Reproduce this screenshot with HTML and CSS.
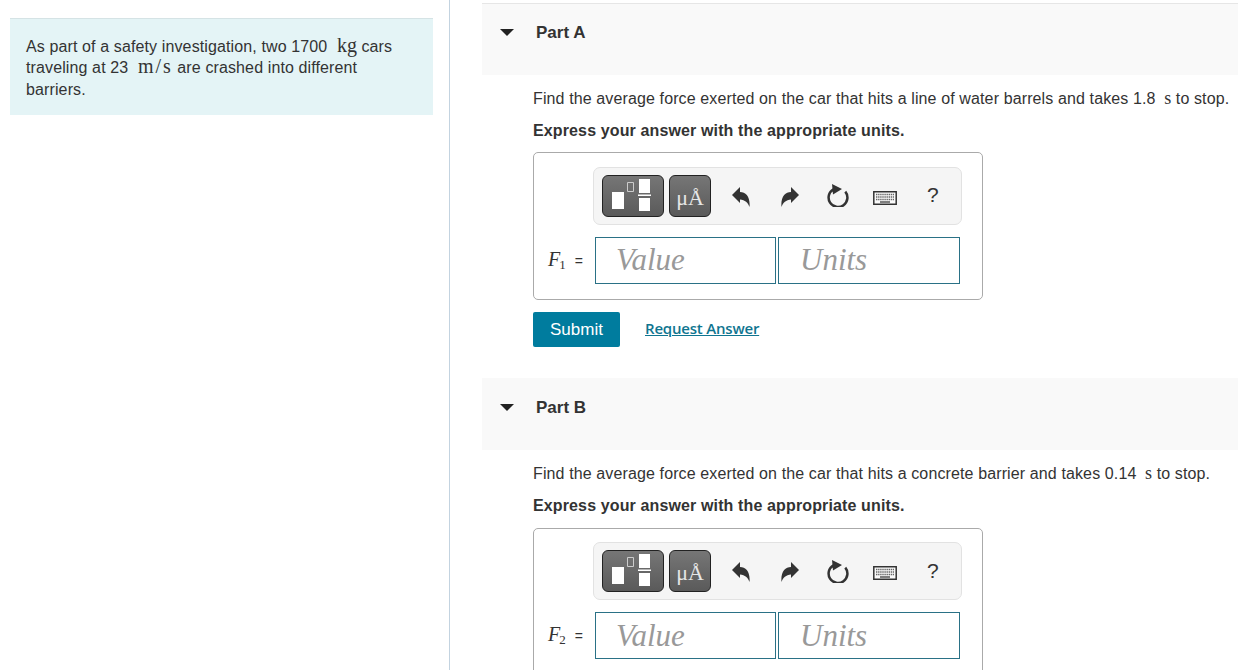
FILE: index.html
```html
<!DOCTYPE html>
<html lang="en">
<head>
    <meta charset="UTF-8">
    <title>Part A and Part B</title>
    <link rel="stylesheet" href="styles.css">
</head>
<body>
    <svg class="defs" width="0" height="0">
        <symbol id="templates" viewBox="1 1 60 40">
            <path fill="#fff" d="M10 17h12v17H10zM37 4h11v14H37zM37 23h11v13H37zM36 19.500h13v1.500H36z"/>
            <path fill="none" stroke="#ccc" d="M25.500 7.500h6v9h-6z"/>
        </symbol>
        <symbol id="undo" viewBox="0 0 18 20">
            <path fill="#333" d="M0 8 8 0v5c6 0 10.500 5 9.500 15C16 15.500 13 13 8 12.500V16z"/>
        </symbol>
        <symbol id="redo" viewBox="0 0 18 20">
            <path fill="#333" d="M18 8 10 0v5C4 5-.5 10 .5 20 2 15.500 5 13 10 12.500V16z"/>
        </symbol>
        <symbol id="reset" viewBox="0 0 22 23">
            <path fill="none" stroke="#333" stroke-width="2.500" d="M6.500 5.300A9.400 9.400 0 1 0 18.300 7.600"/>
            <path fill="#333" d="M5 0 15 5 6 10.500z"/>
        </symbol>
        <symbol id="keyboard" viewBox="0 0 24 14">
            <path fill="#fafafa" stroke="#333" stroke-width="1.500" d="M.8.8h22.400v12.400H.8z"/>
            <path fill="none" stroke="#666" stroke-width="1.500" stroke-dasharray="1.400 .7" d="M3 3.500h18M3 6h18M3 8.500h18"/>
            <path fill="none" stroke="#555" stroke-width="1.500" d="M7 11h10"/>
        </symbol>
    </svg>

    <div class="page">
        <div class="intro-col">
            <div class="intro">
                As part of a safety investigation, two 1700 <span class="unit unit-big">kg</span> cars
                traveling at 23 <span class="unit unit-big unit-rate">m/s</span> are crashed into different barriers.
            </div>
        </div>

        <div class="parts">
            <section class="part">
                <div class="part-head">
                    <span class="caret"></span>
                    <h2>Part A</h2>
                </div>
                <div class="part-body">
                    <p class="question">Find the average force exerted on the car that hits a line of water barrels and takes 1.8 <span class="unit">s</span> to stop.</p>
                    <p class="express">Express your answer with the appropriate units.</p>
                    <div class="answer">
                        <div class="toolbar">
                            <button class="tool-btn tool-templates"><svg width="60" height="40"><use href="#templates"/></svg></button>
                            <button class="tool-btn tool-symbols">μÅ</button>
                            <span class="tool-icon tool-undo"><svg width="18" height="20"><use href="#undo"/></svg></span>
                            <span class="tool-icon tool-redo"><svg width="18" height="20"><use href="#redo"/></svg></span>
                            <span class="tool-icon tool-reset"><svg width="22" height="23"><use href="#reset"/></svg></span>
                            <span class="tool-icon tool-keys"><svg width="24" height="14"><use href="#keyboard"/></svg></span>
                            <span class="tool-help">?</span>
                        </div>
                        <div class="fields">
                            <span class="label"><i>F</i><sub>1</sub><span class="eq">=</span></span>
                            <input class="field" type="text" placeholder="Value">
                            <input class="field" type="text" placeholder="Units">
                        </div>
                    </div>
                    <div class="actions">
                        <button class="submit">Submit</button>
                        <a class="request" href="#">Request Answer</a>
                    </div>
                </div>
            </section>

            <section class="part">
                <div class="part-head">
                    <span class="caret"></span>
                    <h2>Part B</h2>
                </div>
                <div class="part-body">
                    <p class="question">Find the average force exerted on the car that hits a concrete barrier and takes 0.14 <span class="unit">s</span> to stop.</p>
                    <p class="express">Express your answer with the appropriate units.</p>
                    <div class="answer">
                        <div class="toolbar">
                            <button class="tool-btn tool-templates"><svg width="60" height="40"><use href="#templates"/></svg></button>
                            <button class="tool-btn tool-symbols">μÅ</button>
                            <span class="tool-icon tool-undo"><svg width="18" height="20"><use href="#undo"/></svg></span>
                            <span class="tool-icon tool-redo"><svg width="18" height="20"><use href="#redo"/></svg></span>
                            <span class="tool-icon tool-reset"><svg width="22" height="23"><use href="#reset"/></svg></span>
                            <span class="tool-icon tool-keys"><svg width="24" height="14"><use href="#keyboard"/></svg></span>
                            <span class="tool-help">?</span>
                        </div>
                        <div class="fields">
                            <span class="label"><i>F</i><sub>2</sub><span class="eq">=</span></span>
                            <input class="field" type="text" placeholder="Value">
                            <input class="field" type="text" placeholder="Units">
                        </div>
                    </div>
                </div>
            </section>
        </div>
    </div>
</body>
</html>
```

FILE: styles.css
```css
*{
    box-sizing: border-box;
}

html, body{
    margin: 0;
    height: 670px;
    overflow: hidden;
    background-color: white;
    font-family: "Liberation Sans", Arial, sans-serif;
    color: #333;
}

.defs{
    position: absolute;
}

.page{
    display: flex;
    height: 670px;
}

.intro-col{
    width: 450px;
    flex: none;
    padding: 18px 16px 0 10px;
    border-right: 1px solid #c3d3e0;
}

.intro{
    height: 97px;
    padding: 16.600px 35px 0 16px;
    background-color: #e4f4f6;
    border-top: 1px solid #d5e3e5;
    font-size: 16px;
    line-height: 21.500px;
    letter-spacing: 0.12px;
}

.unit{
    margin-left: 4px;
    font-family: "Liberation Serif", serif;
    font-size: 18px;
    line-height: 0;
}

.unit-big{
    margin-left: 5px;
    font-size: 20px;
    letter-spacing: 0;
}

.unit-rate{
    letter-spacing: 2px;
}

.parts{
    flex: 1;
    padding: 3px 0 0 32px;
}

.part{
    height: 375.400px;
}

.part-head{
    display: flex;
    align-items: flex-start;
    height: 72px;
    padding: 20px 0 0 18px;
    background-color: #f9f9f9;
}

.part:first-child .part-head{
    border-top: 1px solid #e6e6e6;
}

.part + .part .part-head{
    padding-top: 21px;
}

.caret{
    width: 0;
    height: 0;
    margin-top: 5px;
    border-left: 7px solid transparent;
    border-right: 7px solid transparent;
    border-top: 7px solid #222;
}

h2{
    margin: 0 0 0 22px;
    font-size: 17px;
    line-height: 18px;
    font-weight: bold;
}

.part-body{
    padding: 13px 0 0 51px;
}

.question{
    margin: 0;
    font-size: 16px;
    line-height: 21px;
    letter-spacing: 0.12px;
    white-space: nowrap;
}

.express{
    margin: 11px 0 11.200px;
    font-size: 16px;
    line-height: 21px;
    letter-spacing: 0.13px;
    font-weight: bold;
}

.answer{
    width: 450px;
    height: 148px;
    padding: 13.500px 20px 0 14px;
    border: 1px solid #aaa;
    border-radius: 5px;
}

.toolbar{
    display: flex;
    align-items: center;
    width: 369px;
    height: 58px;
    margin-left: 45px;
    padding-left: 8px;
    background-color: #f5f5f5;
    border: 1px solid #e2e2e2;
    border-radius: 7px;
}

.tool-btn{
    height: 42px;
    padding: 0;
    color: white;
    background: linear-gradient(#767676, #5a5a5a);
    border: 1px solid #222;
    border-radius: 6px;
}

.tool-btn svg{
    display: block;
}

.tool-templates{
    width: 62px;
}

.tool-symbols{
    width: 42px;
    margin-left: 5px;
    padding-top: 4px;
    font-family: "Liberation Serif", serif;
    font-size: 22px;
    line-height: 1;
    color: #e6e6e6;
}

.tool-icon{
    display: flex;
}

.tool-undo{
    margin-left: 21px;
    margin-top: 2px;
}

.tool-redo{
    margin-left: 31px;
    margin-top: 2px;
}

.tool-reset{
    margin-left: 28px;
}

.tool-keys{
    margin-left: 24px;
    margin-top: 4px;
}

.tool-help{
    margin-left: 30px;
    font-size: 21px;
    margin-top: -1px;
}

.fields{
    display: flex;
    align-items: center;
    margin-top: 12px;
}

.label{
    width: 47px;
    padding-bottom: 2px;
    font-family: "Liberation Serif", serif;
    font-size: 20px;
    white-space: nowrap;
}

.label sub{
    margin-left: -1px;
    font-size: 13px;
    line-height: 0;
    vertical-align: -3px;
}

.eq{
    margin-left: 9px;
    font-family: "Liberation Sans", sans-serif;
    font-size: 14px;
}

.field{
    width: 181px;
    height: 47px;
    margin-right: 2px;
    padding: 0 0 0 20px;
    background-color: white;
    border: 1px solid #2a7186;
    border-radius: 0;
    outline: none;
    font-family: "Liberation Serif", serif;
    font-style: italic;
    font-size: 31px;
}

.field + .field{
    width: 182px;
    padding-left: 21px;
}

.field::placeholder{
    color: #999;
    opacity: 1;
}

.actions{
    display: flex;
    align-items: center;
    margin-top: 12px;
}

.submit{
    width: 87px;
    height: 35px;
    padding: 0;
    color: white;
    background-color: #007c9e;
    border: none;
    border-radius: 2px;
    font-family: "Liberation Sans", sans-serif;
    font-size: 17px;
}

.request{
    margin-left: 25px;
    margin-top: -4px;
    color: #0f7590;
    font-family: "Open Sans", sans-serif;
    font-size: 15px;
    font-weight: 600;
    letter-spacing: -0.2px;
}
```
